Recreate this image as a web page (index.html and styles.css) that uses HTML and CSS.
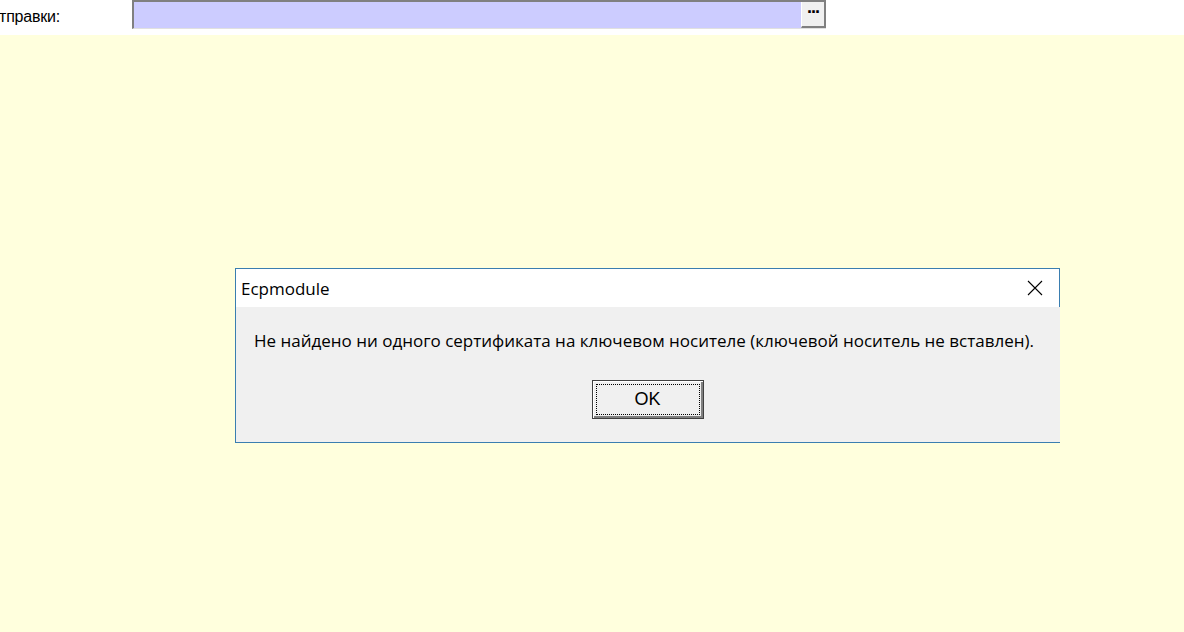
FILE: index.html
```html
<!DOCTYPE html>
<html lang="ru">
<head>
    <meta charset="UTF-8">
    <title>Ecpmodule</title>
    <link rel="stylesheet" href="styles.css">
</head>
<body>

<div class="topbar">
    <span class="label">тправки:</span>
    <div class="field">
        <div class="field-input"></div>
        <button class="browse" type="button">&middot;&middot;&middot;</button>
    </div>
</div>

<main class="workspace">
    <div class="dialog">
        <div class="dialog-title">
            <span class="caption">Ecpmodule</span>
            <svg class="close" width="16" height="16" viewBox="0 0 16 16">
                <path d="M1 1 L15 15 M15 1 L1 15" stroke="#000" stroke-width="1.1" fill="none"/>
            </svg>
        </div>
        <div class="dialog-body">
            <p class="message">Не найдено ни одного сертификата на ключевом носителе (ключевой носитель не вставлен).</p>
            <div class="actions">
                <button class="ok" type="button"><span>OK</span></button>
            </div>
        </div>
    </div>
</main>

</body>
</html>
```

FILE: styles.css
```css
body {
    margin: 0;
    padding: 0;
    background-color: #ffffdd;
    font-family: "Liberation Sans", Arial, sans-serif;
    width: 1184px;
    height: 632px;
    overflow: hidden;
}

.topbar {
    display: flex;
    align-items: flex-start;
    height: 35px;
    background-color: #ffffff;
}

.label {
    width: 133px;
    font-size: 16px;
    color: #000;
    padding-top: 8px;
    margin-left: -1px;
    letter-spacing: -0.2px;
}

.field {
    display: flex;
    width: 694px;
    height: 29px;
    box-sizing: border-box;
    border-top: 2px solid #808080;
    border-left: 2px solid #808080;
    border-bottom: 1px solid #e0e0e0;
    background-color: #ccccff;
}

.field-input {
    flex: 1;
}

.browse {
    width: 25px;
    height: 26px;
    margin: 0;
    padding: 0 0 4px 0;
    background-color: #f0f0f0;
    border: none;
    border-right: 2px solid #808080;
    border-bottom: 2px solid #808080;
    border-left: 1px solid #ffffff;
    font-family: "Liberation Sans", Arial, sans-serif;
    font-size: 18px;
    font-weight: bold;
    line-height: 14px;
    color: #000;
    letter-spacing: -2px;
}

.workspace {
    position: relative;
    height: 597px;
}

.dialog {
    position: absolute;
    left: 235px;
    top: 233px;
    width: 825px;
    box-sizing: border-box;
    border: 1px solid #3a7eb0;
    border-right: none;
}

.dialog-title {
    display: flex;
    align-items: center;
    justify-content: space-between;
    height: 38px;
    background-color: #ffffff;
    border-right: 1px solid #3a7eb0;
}

.caption {
    font-family: "Open Sans", "Noto Sans", sans-serif;
    font-size: 17px;
    color: #000;
    padding-left: 5px;
    padding-top: 1px;
}

.close {
    margin-right: 16px;
    margin-bottom: 1px;
}

.dialog-body {
    background-color: #f0f0f0;
    height: 135px;
    padding: 0 18px;
}

.message {
    margin: 0;
    padding-top: 22px;
    font-family: "Open Sans", "Noto Sans", sans-serif;
    font-size: 17px;
    color: #000;
    white-space: nowrap;
}

.actions {
    display: flex;
    justify-content: center;
    padding-top: 28px;
    padding-right: 1px;
}

.ok {
    width: 112px;
    height: 39px;
    padding: 3px;
    box-sizing: border-box;
    background-color: #f0f0f0;
    border: 1px solid #404040;
    box-shadow: inset 1px 1px 0 #ffffff, inset -2px -2px 0 #808080;
    cursor: pointer;
}

.ok span {
    display: flex;
    align-items: center;
    justify-content: center;
    height: 100%;
    box-sizing: border-box;
    border: 1px dotted #000;
    font-family: "Liberation Sans", Arial, sans-serif;
    font-size: 18px;
    color: #000;
}
```
